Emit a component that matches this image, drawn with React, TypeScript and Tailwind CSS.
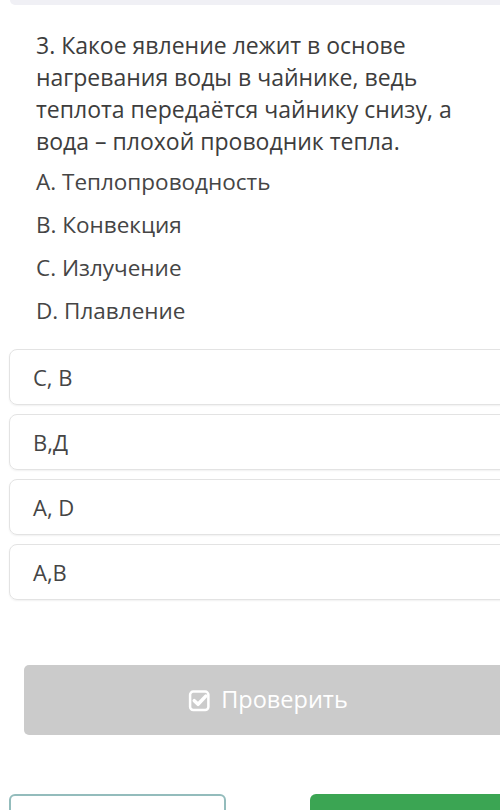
import React from 'react';

const options = ['A. Теплопроводность', 'B. Конвекция', 'C. Излучение', 'D. Плавление'];
const answers = ['C, B', 'B,Д', 'A, D', 'A,B'];

function CheckSquare() {
  return (
    <svg width="23" height="23" viewBox="0 0 22 22" fill="none" stroke="currentColor">
      <rect x="2" y="2.5" width="17.5" height="17.5" rx="3" strokeWidth="2.4" />
      <path d="M6 11.2 L9.6 14.6 L17 6.8" strokeWidth="3.4" strokeLinecap="round" strokeLinejoin="round" />
    </svg>
  );
}

export default function App() {
  return (
    <div
      className="w-[500px] h-[810px] overflow-hidden bg-white text-[#3d3d3d]"
      style={{ fontFamily: '"Open Sans", "Noto Sans", sans-serif' }}
    >
      <div className="w-[530px]">
        {/* top strip */}
        <div className="ml-[10px] h-[5px] bg-[#f0f0f5] rounded-bl-lg" />

        {/* question */}
        <div className="pl-[36px] pr-[30px] pt-[24px] w-[500px]">
          <p className="text-[23px] leading-[32px]">
            3. Какое явление лежит в основе нагревания воды в чайнике, ведь теплота передаётся чайнику снизу, а вода – плохой проводник тепла.
          </p>
          <div className="mt-[9px] flex flex-col gap-[11px]">
            {options.map((o) => (
              <div key={o} className="text-[22.5px] leading-[32px] text-[#454545]">
                {o}
              </div>
            ))}
          </div>
        </div>

        {/* answers */}
        <div className="mt-[22px] pl-[9px] flex flex-col gap-[9px]">
          {answers.map((a) => (
            <div
              key={a}
              className="h-[56px] flex items-center pl-[23px] border border-[#e3e3e3] rounded-lg shadow-[0_1px_2px_rgba(0,0,0,0.06)] text-[22px] text-[#454545]"
            >
              {a}
            </div>
          ))}
        </div>

        {/* check button */}
        <div className="mt-[65px] pl-[24px]">
          <button className="w-[488px] h-[70px] bg-[#cbcbcb] rounded-[5px] flex items-center justify-center gap-[10px] text-white text-[23.5px]">
            <CheckSquare />
            <span>Проверить</span>
          </button>
        </div>

        {/* bottom buttons */}
        <div className="mt-[59px] flex items-start">
          <div className="ml-[9px] w-[217px] h-[40px] border-2 border-[#93bcbc] rounded-md bg-white" />
          <div className="ml-[84px] w-[220px] h-[40px] bg-[#3ba553] rounded-md" />
        </div>
      </div>
    </div>
  );
}
